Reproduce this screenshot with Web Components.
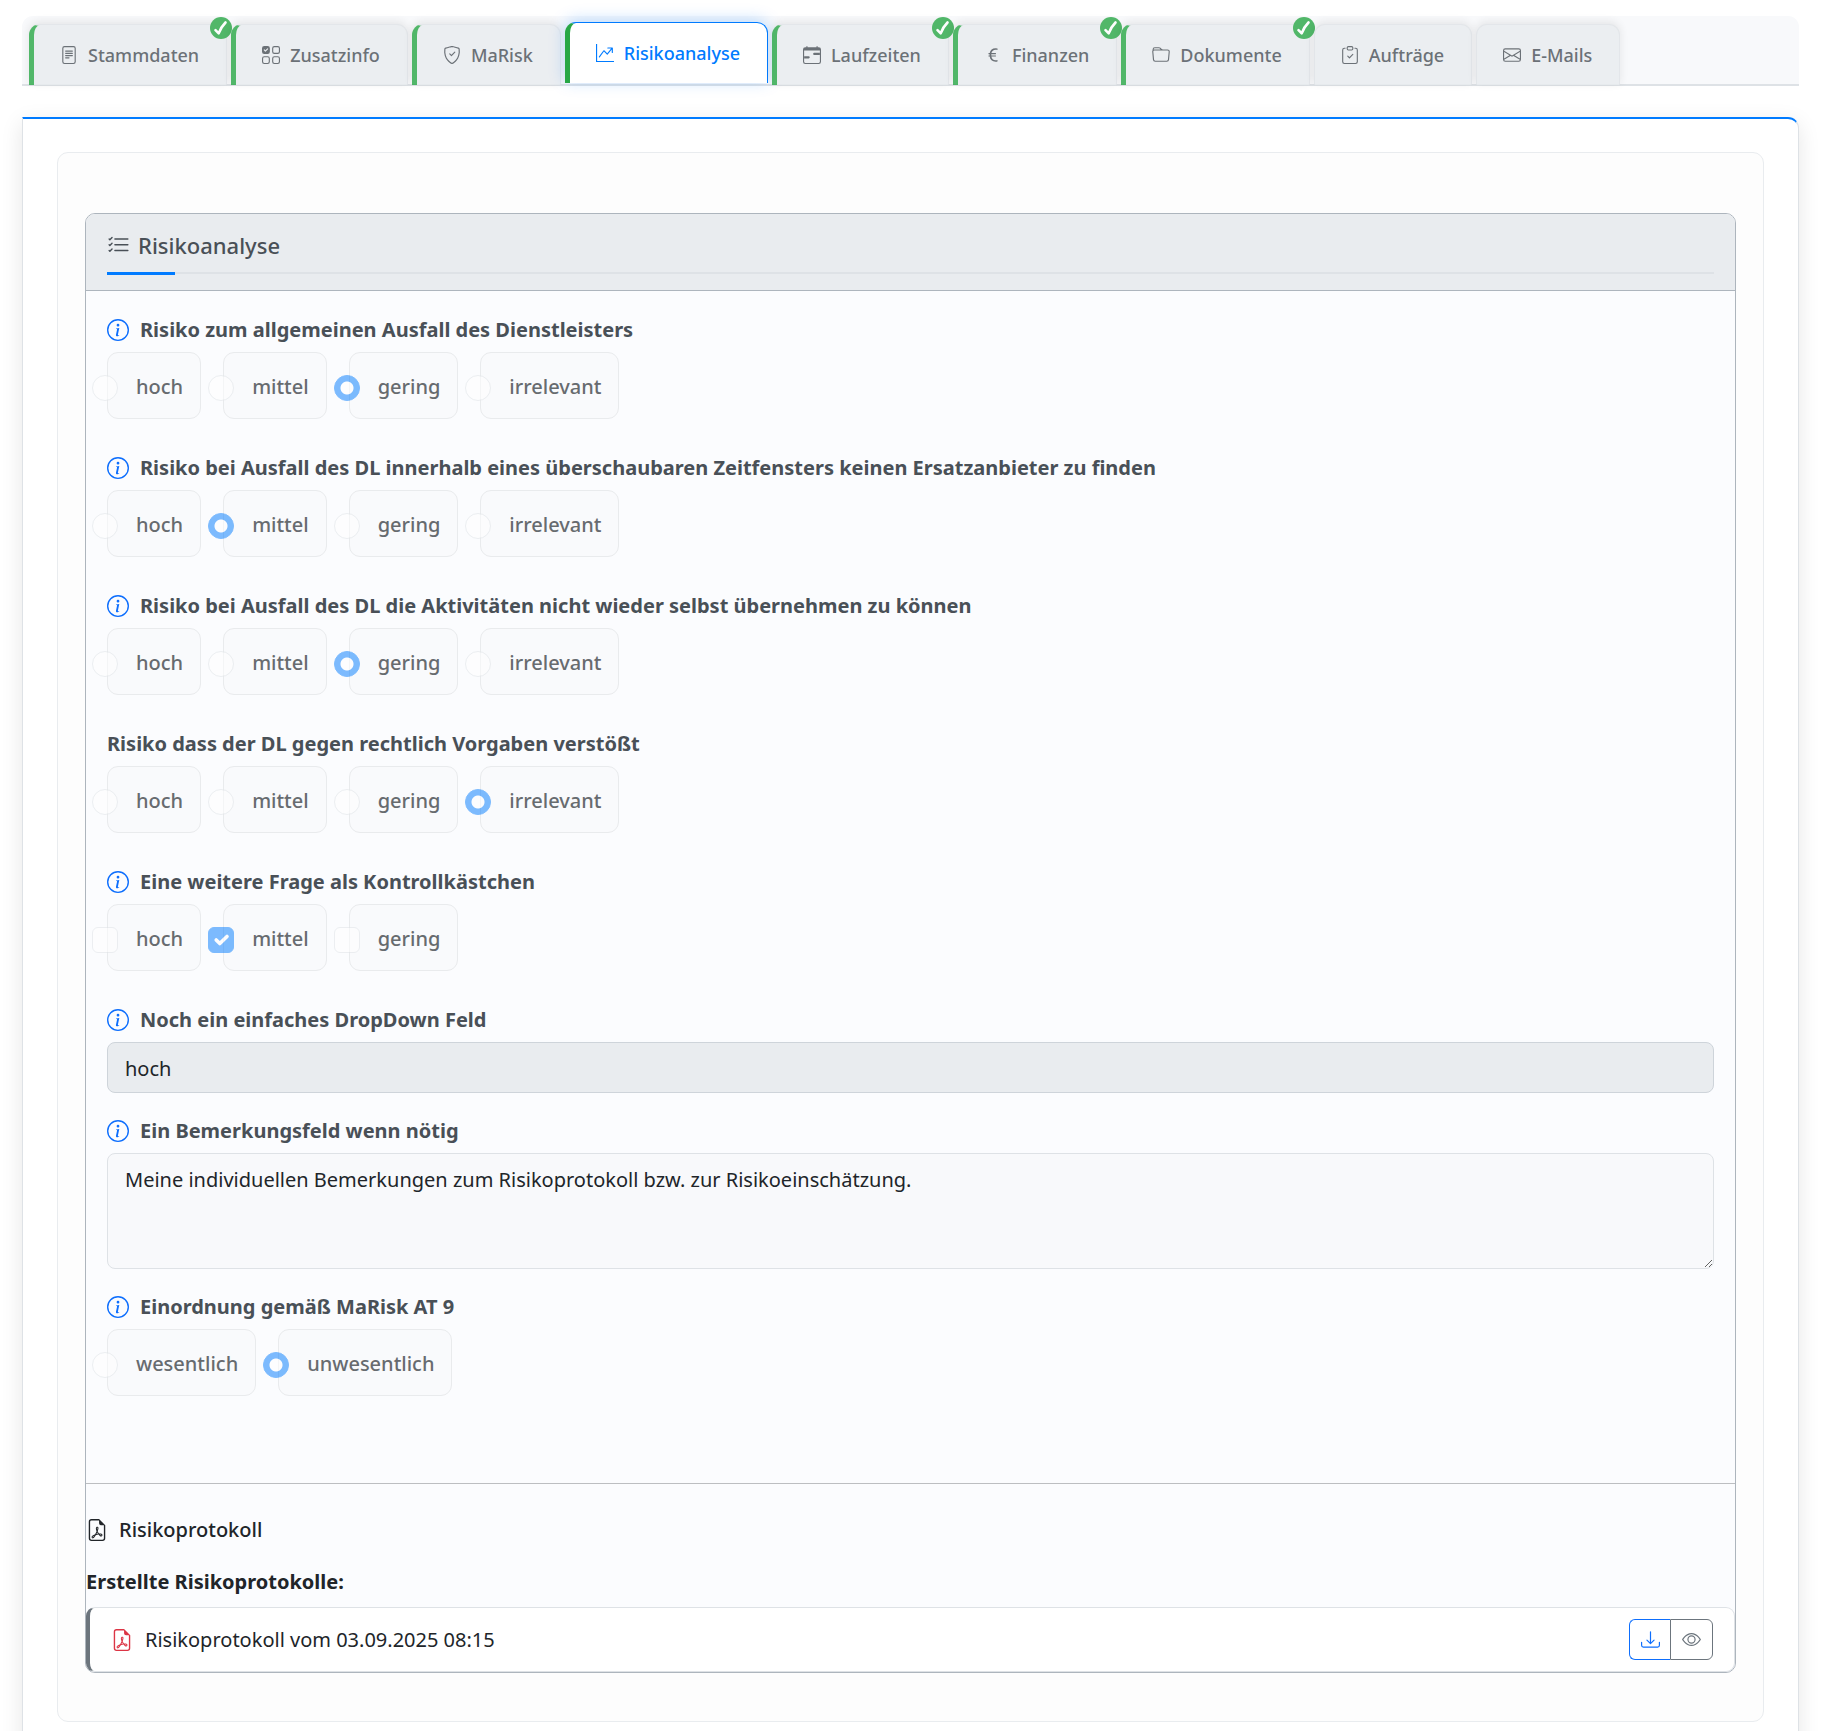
<!DOCTYPE html>
<html lang="de">
<head>
<meta charset="utf-8">
<meta name="viewport" content="width=device-width, initial-scale=1">
<title>Risikoanalyse</title>
<style>
  body {
    margin: 0;
    background: #fff;
    color: #212529;
    font-family: "Noto Sans", "Open Sans", sans-serif;
    font-size: 20px;
    line-height: 33px;
  }
</style>
</head>
<body>

<app-shell>
  <tab-bar slot="tabs">
    <nav-tab icon="file-text" state="done" checked>Stammdaten</nav-tab>
    <nav-tab icon="checks-grid" state="done">Zusatzinfo</nav-tab>
    <nav-tab icon="shield-check" state="done">MaRisk</nav-tab>
    <nav-tab icon="graph-up" state="done" active>Risikoanalyse</nav-tab>
    <nav-tab icon="calendar-range" state="done" checked>Laufzeiten</nav-tab>
    <nav-tab icon="euro" state="done" checked>Finanzen</nav-tab>
    <nav-tab icon="folder" state="done" checked>Dokumente</nav-tab>
    <nav-tab icon="clipboard-check">Aufträge</nav-tab>
    <nav-tab icon="envelope">E-Mails</nav-tab>
  </tab-bar>

  <tab-panel>
    <form-card icon="list-check" heading="Risikoanalyse">
      <choice-question info options="hoch,mittel,gering,irrelevant" value="gering">Risiko zum allgemeinen Ausfall des Dienstleisters</choice-question>
      <choice-question info options="hoch,mittel,gering,irrelevant" value="mittel">Risiko bei Ausfall des DL innerhalb eines überschaubaren Zeitfensters keinen Ersatzanbieter zu finden</choice-question>
      <choice-question info options="hoch,mittel,gering,irrelevant" value="gering">Risiko bei Ausfall des DL die Aktivitäten nicht wieder selbst übernehmen zu können</choice-question>
      <choice-question options="hoch,mittel,gering,irrelevant" value="irrelevant">Risiko dass der DL gegen rechtlich Vorgaben verstößt</choice-question>
      <choice-question info type="checkbox" options="hoch,mittel,gering" value="mittel">Eine weitere Frage als Kontrollkästchen</choice-question>
      <select-question options="hoch,mittel,gering" value="hoch">Noch ein einfaches DropDown Feld</select-question>
      <text-question value="Meine individuellen Bemerkungen zum Risikoprotokoll bzw. zur Risikoeinschätzung.">Ein Bemerkungsfeld wenn nötig</text-question>
      <choice-question info options="wesentlich,unwesentlich" value="unwesentlich">Einordnung gemäß MaRisk AT 9</choice-question>

      <protocol-list slot="footer">
        <protocol-item>Risikoprotokoll vom 03.09.2025 08:15</protocol-item>
      </protocol-list>
    </form-card>
  </tab-panel>
</app-shell>

<script>
const ICONS = {
  'file-text': '<path d="M5 4a.5.5 0 0 0 0 1h6a.5.5 0 0 0 0-1zm-.5 2.5A.5.5 0 0 1 5 6h6a.5.5 0 0 1 0 1H5a.5.5 0 0 1-.5-.5M5 8a.5.5 0 0 0 0 1h6a.5.5 0 0 0 0-1zm0 2a.5.5 0 0 0 0 1h3a.5.5 0 0 0 0-1z"/><path d="M2 2a2 2 0 0 1 2-2h8a2 2 0 0 1 2 2v12a2 2 0 0 1-2 2H4a2 2 0 0 1-2-2zm10-1H4a1 1 0 0 0-1 1v12a1 1 0 0 0 1 1h8a1 1 0 0 0 1-1V2a1 1 0 0 0-1-1"/>',
  'checks-grid': '<g fill="none" stroke="currentColor"><rect x="9.5" y=".5" width="6" height="6" rx="1.5"/><rect x=".5" y="9.5" width="6" height="6" rx="1.5"/><rect x="9.5" y="9.5" width="6" height="6" rx="1.5"/></g><path d="M0 2a2 2 0 0 1 2-2h3a2 2 0 0 1 2 2v3a2 2 0 0 1-2 2H2a2 2 0 0 1-2-2zm5.354.854a.5.5 0 1 0-.708-.708L3 3.793l-.646-.647a.5.5 0 1 0-.708.708l1 1a.5.5 0 0 0 .708 0z"/>',
  'shield-check': '<path d="M5.338 1.59a61 61 0 0 0-2.837.856.48.48 0 0 0-.328.39c-.554 4.157.726 7.19 2.253 9.188a10.7 10.7 0 0 0 2.287 2.233c.346.244.652.42.893.533q.18.085.293.118a1 1 0 0 0 .101.025 1 1 0 0 0 .1-.025q.114-.034.294-.118c.24-.113.547-.29.893-.533a10.7 10.7 0 0 0 2.287-2.233c1.527-1.997 2.807-5.031 2.253-9.188a.48.48 0 0 0-.328-.39c-.651-.213-1.75-.56-2.837-.855C9.552 1.29 8.531 1.067 8 1.067c-.53 0-1.552.223-2.662.524zM5.072.56C6.157.265 7.31 0 8 0s1.843.265 2.928.56c1.11.3 2.229.655 2.887.87a1.54 1.54 0 0 1 1.044 1.262c.596 4.477-.787 7.795-2.465 9.99a11.8 11.8 0 0 1-2.517 2.453 7 7 0 0 1-1.048.625c-.28.132-.581.24-.829.24s-.548-.108-.829-.24a7 7 0 0 1-1.048-.625 11.8 11.8 0 0 1-2.517-2.453C1.928 10.487.545 7.169 1.141 2.692A1.54 1.54 0 0 1 2.185 1.43 63 63 0 0 1 5.072.56"/><path d="M10.854 5.146a.5.5 0 0 1 0 .708l-3 3a.5.5 0 0 1-.708 0l-1.5-1.5a.5.5 0 1 1 .708-.708L7.5 7.793l2.646-2.647a.5.5 0 0 1 .708 0"/>',
  'graph-up': '<path d="M0 0h1v15h15v1H0zm10 3.5a.5.5 0 0 1 .5-.5h4a.5.5 0 0 1 .5.5v4a.5.5 0 0 1-1 0V4.9l-3.613 4.417a.5.5 0 0 1-.74.037L7.06 6.767l-3.656 5.027a.5.5 0 0 1-.808-.588l4-5.5a.5.5 0 0 1 .758-.06l2.609 2.61L13.445 4H10.5a.5.5 0 0 1-.5-.5"/>',
  'calendar-range': '<path d="M9 7a1 1 0 0 1 1-1h5v2h-5a1 1 0 0 1-1-1M1 9h4a1 1 0 0 1 0 2H1z"/><path d="M3.5 0a.5.5 0 0 1 .5.5V1h8V.5a.5.5 0 0 1 1 0V1h1a2 2 0 0 1 2 2v11a2 2 0 0 1-2 2H2a2 2 0 0 1-2-2V3a2 2 0 0 1 2-2h1V.5a.5.5 0 0 1 .5-.5M1 4v10a1 1 0 0 0 1 1h12a1 1 0 0 0 1-1V4z"/>',
  'euro': '<path d="M4 9.42h1.063C5.4 12.323 7.317 14 10.34 14c.622 0 1.167-.068 1.659-.185v-1.3c-.484.119-1.045.17-1.659.17-2.1 0-3.455-1.198-3.775-3.264h4.017v-.928H6.497v-.936q-.002-.165.008-.329h4.078v-.927H6.618c.388-1.898 1.719-2.985 3.723-2.985.614 0 1.175.05 1.659.177V2.194A6.6 6.6 0 0 0 10.341 2c-2.928 0-4.82 1.569-5.244 4.3H4v.928h1.01v1.265H4z"/>',
  'folder': '<path d="M.54 3.87.5 3a2 2 0 0 1 2-2h3.672a2 2 0 0 1 1.414.586l.828.828A2 2 0 0 0 9.828 3h3.982a2 2 0 0 1 1.992 2.181l-.637 7A2 2 0 0 1 13.174 14H2.826a2 2 0 0 1-1.991-1.819l-.637-7a2 2 0 0 1 .342-1.31zM2.19 4a1 1 0 0 0-.996 1.09l.637 7a1 1 0 0 0 .995.91h10.348a1 1 0 0 0 .995-.91l.637-7A1 1 0 0 0 13.81 4zm4.69-1.707A1 1 0 0 0 6.172 2H2.5a1 1 0 0 0-1 .981l.006.139q.323-.119.684-.12h5.396z"/>',
  'clipboard-check': '<path d="M10.854 7.146a.5.5 0 0 1 0 .708l-3 3a.5.5 0 0 1-.708 0l-1.5-1.5a.5.5 0 1 1 .708-.708L7.5 9.793l2.646-2.647a.5.5 0 0 1 .708 0"/><path d="M4 1.5H3a2 2 0 0 0-2 2V14a2 2 0 0 0 2 2h10a2 2 0 0 0 2-2V3.5a2 2 0 0 0-2-2h-1v1h1a1 1 0 0 1 1 1V14a1 1 0 0 1-1 1H3a1 1 0 0 1-1-1V3.5a1 1 0 0 1 1-1h1z"/><path d="M9.5 1a.5.5 0 0 1 .5.5v1a.5.5 0 0 1-.5.5h-3a.5.5 0 0 1-.5-.5v-1a.5.5 0 0 1 .5-.5zm-3-1A1.5 1.5 0 0 0 5 1.5v1A1.5 1.5 0 0 0 6.5 4h3A1.5 1.5 0 0 0 11 2.5v-1A1.5 1.5 0 0 0 9.5 0z"/>',
  'envelope': '<path d="M0 4a2 2 0 0 1 2-2h12a2 2 0 0 1 2 2v8a2 2 0 0 1-2 2H2a2 2 0 0 1-2-2zm2-1a1 1 0 0 0-1 1v.217l7 4.2 7-4.2V4a1 1 0 0 0-1-1zm13 2.383-4.708 2.825L15 11.105zm-.034 6.876-5.64-3.471L8 9.583l-1.326-.795-5.64 3.47A1 1 0 0 0 2 13h12a1 1 0 0 0 .966-.741M1 11.105l4.708-2.897L1 5.383z"/>',
  'list-check': '<path d="M5 11.5a.5.5 0 0 1 .5-.5h9a.5.5 0 0 1 0 1h-9a.5.5 0 0 1-.5-.5m0-4a.5.5 0 0 1 .5-.5h9a.5.5 0 0 1 0 1h-9a.5.5 0 0 1-.5-.5m0-4a.5.5 0 0 1 .5-.5h9a.5.5 0 0 1 0 1h-9a.5.5 0 0 1-.5-.5M3.854 2.146a.5.5 0 0 1 0 .708l-1.5 1.5a.5.5 0 0 1-.708 0l-.5-.5a.5.5 0 1 1 .708-.708L2 3.293l1.146-1.147a.5.5 0 0 1 .708 0m0 4a.5.5 0 0 1 0 .708l-1.5 1.5a.5.5 0 0 1-.708 0l-.5-.5a.5.5 0 1 1 .708-.708L2 7.293l1.146-1.147a.5.5 0 0 1 .708 0m0 4a.5.5 0 0 1 0 .708l-1.5 1.5a.5.5 0 0 1-.708 0l-.5-.5a.5.5 0 0 1 .708-.708l.146.147 1.146-1.147a.5.5 0 0 1 .708 0"/>',
  'info-circle': '<path d="M8 15A7 7 0 1 1 8 1a7 7 0 0 1 0 14m0 1A8 8 0 1 0 8 0a8 8 0 0 0 0 16"/><path d="m8.93 6.588-2.29.287-.082.38.45.083c.294.07.352.176.288.469l-.738 3.468c-.194.897.105 1.319.808 1.319.545 0 1.178-.252 1.465-.598l.088-.416c-.2.176-.492.246-.686.246-.275 0-.375-.193-.304-.533zM9 4.5a1 1 0 1 1-2 0 1 1 0 0 1 2 0"/>',
  'file-pdf': '<path d="M14 14V4.5L9.5 0H4a2 2 0 0 0-2 2v12a2 2 0 0 0 2 2h8a2 2 0 0 0 2-2M9.5 3A1.5 1.5 0 0 0 11 4.5h2V14a1 1 0 0 1-1 1H4a1 1 0 0 1-1-1V2a1 1 0 0 1 1-1h5.5z"/><path d="M4.603 14.087a.8.8 0 0 1-.438-.42c-.195-.388-.13-.776.08-1.102.198-.307.526-.568.897-.787a7.7 7.7 0 0 1 1.482-.645 20 20 0 0 0 1.062-2.227 7.3 7.3 0 0 1-.43-1.295c-.086-.4-.119-.796-.046-1.136.075-.354.274-.672.65-.823.192-.077.4-.12.602-.077a.7.7 0 0 1 .477.365c.088.164.12.356.127.538.007.188-.012.396-.047.614-.084.51-.27 1.134-.52 1.794a11 11 0 0 0 .98 1.686 5.8 5.8 0 0 1 1.334.05c.364.066.734.195.96.465.12.144.193.32.2.518.007.192-.047.382-.138.563a1.04 1.04 0 0 1-.354.416.86.86 0 0 1-.51.138c-.331-.014-.654-.196-.933-.417a5.7 5.7 0 0 1-.911-.95 11.7 11.7 0 0 0-1.997.406 11.3 11.3 0 0 1-1.02 1.51c-.292.35-.609.656-.927.787a.8.8 0 0 1-.58.029m1.379-1.901q-.25.115-.459.238c-.328.194-.541.383-.647.547-.094.145-.096.25-.04.361q.016.032.026.044l.035-.012c.137-.056.355-.235.635-.572a8 8 0 0 0 .45-.606m1.64-1.33a13 13 0 0 1 1.01-.193 12 12 0 0 1-.51-.858 21 21 0 0 1-.5 1.05zm2.446.45q.226.245.435.41c.24.19.407.253.498.256a.1.1 0 0 0 .07-.015.3.3 0 0 0 .094-.125.44.44 0 0 0 .059-.2.1.1 0 0 0-.026-.063c-.052-.062-.2-.152-.518-.209a4 4 0 0 0-.612-.053zM8.078 7.8a7 7 0 0 0 .2-.828q.046-.282.038-.465a.6.6 0 0 0-.032-.198.5.5 0 0 0-.145.04c-.087.035-.158.106-.196.283-.04.192-.03.469.046.822q.036.167.09.346z"/>',
  'download': '<path d="M.5 9.9a.5.5 0 0 1 .5.5v2.5a1 1 0 0 0 1 1h12a1 1 0 0 0 1-1v-2.5a.5.5 0 0 1 1 0v2.5a2 2 0 0 1-2 2H2a2 2 0 0 1-2-2v-2.5a.5.5 0 0 1 .5-.5"/><path d="M7.646 11.854a.5.5 0 0 0 .708 0l3-3a.5.5 0 0 0-.708-.708L8.5 10.293V1.5a.5.5 0 0 0-1 0v8.793L5.354 8.146a.5.5 0 1 0-.708.708z"/>',
  'eye': '<path d="M16 8s-3-5.5-8-5.5S0 8 0 8s3 5.5 8 5.5S16 8 16 8M1.173 8a13 13 0 0 1 1.66-2.043C4.12 4.668 5.88 3.5 8 3.5s3.879 1.168 5.168 2.457A13 13 0 0 1 14.828 8q-.086.13-.195.288c-.335.48-.83 1.12-1.465 1.755C11.879 11.332 10.119 12.5 8 12.5s-3.879-1.168-5.168-2.457A13 13 0 0 1 1.172 8z"/><path d="M8 5.5a2.5 2.5 0 1 0 0 5 2.5 2.5 0 0 0 0-5M4.5 8a3.5 3.5 0 1 1 7 0 3.5 3.5 0 0 1-7 0"/>'
};

class UiIcon extends HTMLElement {
    constructor() {
        super();
        this.shadowDOM = this.attachShadow({mode: "open"});
    }

    connectedCallback() {
        this.shadowDOM.innerHTML = `
            <style>
                :host { display: block; flex: none; width: 22px; height: 22px; }
                svg { display: block; width: 100%; height: 100%; }
            </style>
            <svg viewBox="0 0 16 16" fill="currentColor" fill-rule="nonzero" aria-hidden="true">${ICONS[this.getAttribute("name")]}</svg>
        `;
    }
}
customElements.define("ui-icon", UiIcon);

class AppShell extends HTMLElement {
    constructor() {
        super();
        this.shadowDOM = this.attachShadow({mode: "open"});
        this.shadowDOM.innerHTML = `
            <style>
                :host {
                    display: block;
                    box-sizing: border-box;
                    height: 100vh;
                    overflow-y: auto;
                    scrollbar-width: none;
                    padding: 16px 26px 16px 22px;
                }
                main { margin-top: 31px; }
            </style>
            <slot name="tabs"></slot>
            <main><slot></slot></main>
        `;
    }
}
customElements.define("app-shell", AppShell);

class TabBar extends HTMLElement {
    constructor() {
        super();
        this.shadowDOM = this.attachShadow({mode: "open"});
        this.shadowDOM.innerHTML = `
            <style>
                :host { display: block; }
                nav {
                    display: flex;
                    gap: 4px;
                    padding: 8px 7px 0;
                    background: #f8f9fb;
                    border-bottom: 2px solid #dee2e6;
                    border-radius: 11px 11px 0 0;
                }
            </style>
            <nav><slot></slot></nav>
        `;
    }
}
customElements.define("tab-bar", TabBar);

class NavTab extends HTMLElement {
    constructor() {
        super();
        this.shadowDOM = this.attachShadow({mode: "open"});
    }

    connectedCallback() {
        const badge = this.hasAttribute("checked") ? `
            <svg class="badge" viewBox="0 0 22 22" aria-hidden="true">
                <circle cx="11" cy="11" r="11" fill="#28a745"/>
                <path d="M5.5 13.2 8.7 16.4Q11 10 15.5 5.5" fill="none" stroke="#fff" stroke-width="2.6" stroke-linecap="round" stroke-linejoin="round"/>
            </svg>` : "";
        this.shadowDOM.innerHTML = `
            <style>
                :host { display: block; position: relative; margin-bottom: -1px; opacity: .8; }
                :host([active]) { opacity: 1; transform: translateY(-2px); }
                button {
                    display: flex;
                    align-items: center;
                    gap: 10px;
                    box-sizing: border-box;
                    height: 61px;
                    padding: 0 27px 0 26px;
                    border: 1px solid #dee2e6;
                    border-bottom: 0;
                    border-radius: 11px 11px 0 0;
                    background: #e9ecef;
                    box-shadow: 0 -2px 8px rgba(0, 0, 0, .1);
                    color: #495057;
                    font: 500 18px/26px "Noto Sans", "Open Sans", sans-serif;
                    white-space: nowrap;
                }
                :host([state="done"]) button { border-left: 5px solid #28a745; }
                :host([active]) button {
                    background: #fff;
                    border-color: #007bff;
                    border-left-color: #28a745;
                    color: #007bff;
                    box-shadow: 0 -2px 16px rgba(0, 123, 255, .25);
                }
                ui-icon { width: 18px; height: 18px; }
                .badge { position: absolute; top: -7px; right: -5px; width: 22px; height: 22px; }
            </style>
            <button type="button"><ui-icon name="${this.getAttribute("icon")}"></ui-icon><slot></slot></button>
            ${badge}
        `;
    }
}
customElements.define("nav-tab", NavTab);

class TabPanel extends HTMLElement {
    constructor() {
        super();
        this.shadowDOM = this.attachShadow({mode: "open"});
        this.shadowDOM.innerHTML = `
            <style>
                :host {
                    display: block;
                    padding: 33px 34px;
                    border: 1px solid #dee2e6;
                    border-top: 2px solid #007bff;
                    border-radius: 0 11px 11px 11px;
                    background: #fff;
                    box-shadow: 0 6px 22px rgba(0, 0, 0, .1);
                }
                section {
                    padding: 60px 27px 48px;
                    border: 1px solid #e9ecef;
                    border-radius: 11px;
                    background: #fdfdfd;
                }
            </style>
            <section><slot></slot></section>
        `;
    }
}
customElements.define("tab-panel", TabPanel);

class FormCard extends HTMLElement {
    constructor() {
        super();
        this.shadowDOM = this.attachShadow({mode: "open"});
    }

    connectedCallback() {
        this.shadowDOM.innerHTML = `
            <style>
                :host {
                    display: block;
                    border: 1px solid #adb5bd;
                    border-radius: 10px;
                    background: #fbfcfe;
                }
                header {
                    padding: 16px 21px;
                    border-bottom: 1px solid #adb5bd;
                    border-radius: 9px 9px 0 0;
                    background: #e9ecef;
                }
                h2 {
                    display: flex;
                    align-items: center;
                    gap: 8px;
                    margin: 0;
                    padding-bottom: 12px;
                    border-bottom: 2px solid #dee2e6;
                    color: #495057;
                    font-size: 22px;
                    font-weight: 500;
                    line-height: 30px;
                }
                /* accent bar laid over the start of the heading's rule */
                h2::after {
                    content: "";
                    position: absolute;
                    bottom: -1px;
                    left: 0;
                    width: 68px;
                    height: 3px;
                    background: #007bff;
                }
                .title { position: relative; }
                .title ui-icon { width: 23px; height: 23px; }
                .body { padding: 23px 21px 54px; }
                footer { border-top: 1px solid #bcbec1; }
            </style>
            <header>
                <div class="title">
                    <h2><ui-icon name="${this.getAttribute("icon")}"></ui-icon>${this.getAttribute("heading")}</h2>
                </div>
            </header>
            <div class="body"><slot></slot></div>
            <footer><slot name="footer"></slot></footer>
        `;
    }
}
customElements.define("form-card", FormCard);

const QUESTION_STYLE = `
    :host { display: block; margin-bottom: 22px; }
    .caption {
        display: flex;
        align-items: center;
        gap: 11px;
        margin-bottom: 7px;
        padding: 0;
        color: #495057;
        font-size: 20px;
        font-weight: 700;
        line-height: 31px;
    }
    .caption ui-icon { color: #0d6efd; }
    .field {
        display: block;
        box-sizing: border-box;
        width: 100%;
        margin: 0;
        padding: 9px 17px 7px;
        border: 1px solid #ced4da;
        border-radius: 8px;
        color: #212529;
        font: inherit;
        line-height: 33px;
        opacity: 1;
    }
`;

class ChoiceQuestion extends HTMLElement {
    constructor() {
        super();
        this.shadowDOM = this.attachShadow({mode: "open"});
    }

    connectedCallback() {
        const type = this.getAttribute("type") || "radio";
        const value = this.getAttribute("value");
        const info = this.hasAttribute("info") ? '<ui-icon name="info-circle"></ui-icon>' : "";
        const options = this.getAttribute("options").split(",").map(option => `
            <label><input type="${type}" name="choice" value="${option}" disabled ${option === value ? "checked" : ""}>${option}</label>
        `).join("");

        this.shadowDOM.innerHTML = `
            <style>
                ${QUESTION_STYLE}
                fieldset { margin: 0; padding: 0 0 11px; border: 0; min-width: 0; }
                .options { display: flex; flex-wrap: wrap; gap: 22px; }
                label {
                    display: flex;
                    align-items: center;
                    padding: 17px 17px 15px 28px;
                    border: 1px solid #e9ebed;
                    border-radius: 11px;
                    background: #f9fafc;
                    color: #676b6f;
                    font-weight: 500;
                }
                /* the control straddles the left edge of its box */
                input {
                    appearance: none;
                    box-sizing: border-box;
                    width: 26px;
                    height: 26px;
                    margin: 2px 18px 0 -44px;
                    border: 1px solid #dee2e6;
                    border-radius: 50%;
                    background: #fff;
                    opacity: .5;
                }
                input[type="checkbox"] { border-radius: 6px; }
                input:checked { border-color: #007bff; background: #007bff center / 100% no-repeat; }
                input[type="radio"]:checked { background-image: radial-gradient(circle, #fff 6px, transparent 7px); }
                input[type="checkbox"]:checked {
                    background-image: url("data:image/svg+xml,%3Csvg xmlns='http://www.w3.org/2000/svg' viewBox='0 0 20 20'%3E%3Cpath fill='none' stroke='%23fff' stroke-linecap='round' stroke-linejoin='round' stroke-width='3' d='m6 10 3 3 6-6'/%3E%3C/svg%3E");
                }
            </style>
            <fieldset>
                <legend class="caption">${info}<slot></slot></legend>
                <div class="options">${options}</div>
            </fieldset>
        `;
    }
}
customElements.define("choice-question", ChoiceQuestion);

class SelectQuestion extends HTMLElement {
    constructor() {
        super();
        this.shadowDOM = this.attachShadow({mode: "open"});
    }

    connectedCallback() {
        const value = this.getAttribute("value");
        const options = this.getAttribute("options").split(",")
            .map(option => `<option ${option === value ? "selected" : ""}>${option}</option>`).join("");

        this.shadowDOM.innerHTML = `
            <style>
                ${QUESTION_STYLE}
                select { appearance: none; background: #e9ecef; }
            </style>
            <label class="caption" for="field"><ui-icon name="info-circle"></ui-icon><slot></slot></label>
            <select class="field" id="field" disabled>${options}</select>
        `;
    }
}
customElements.define("select-question", SelectQuestion);

class TextQuestion extends HTMLElement {
    constructor() {
        super();
        this.shadowDOM = this.attachShadow({mode: "open"});
    }

    connectedCallback() {
        this.shadowDOM.innerHTML = `
            <style>
                ${QUESTION_STYLE}
                textarea.field { height: 116px; resize: vertical; border-color: #dee2e6; background: #f8f9fb; }
            </style>
            <label class="caption" for="field"><ui-icon name="info-circle"></ui-icon><slot></slot></label>
            <textarea class="field" id="field" readonly>${this.getAttribute("value")}</textarea>
        `;
    }
}
customElements.define("text-question", TextQuestion);

class ProtocolList extends HTMLElement {
    constructor() {
        super();
        this.shadowDOM = this.attachShadow({mode: "open"});
        this.shadowDOM.innerHTML = `
            <style>
                :host { display: block; padding-top: 29px; }
                h3 {
                    display: flex;
                    align-items: center;
                    gap: 11px;
                    margin: 0 0 19px;
                    font-size: 20px;
                    font-weight: 500;
                    line-height: 33px;
                }
                h4 { margin: 0 0 9px; font-size: 20px; font-weight: 700; line-height: 33px; }
            </style>
            <h3><ui-icon name="file-pdf"></ui-icon>Risikoprotokoll</h3>
            <h4>Erstellte Risikoprotokolle:</h4>
            <slot></slot>
        `;
    }
}
customElements.define("protocol-list", ProtocolList);

class ProtocolItem extends HTMLElement {
    constructor() {
        super();
        this.shadowDOM = this.attachShadow({mode: "open"});
        this.shadowDOM.innerHTML = `
            <style>
                :host {
                    display: flex;
                    align-items: center;
                    gap: 12px;
                    padding: 11px 21px;
                    border: 1px solid #dee2e6;
                    border-left: 4px solid #6c757d;
                    border-radius: 9px;
                    background: #fff;
                }
                .file { color: #dc3545; }
                .name { flex: 1; }
                .actions { display: flex; }
                button {
                    display: flex;
                    align-items: center;
                    justify-content: center;
                    box-sizing: border-box;
                    width: 41px;
                    height: 41px;
                    padding: 0;
                    background: #fff;
                    border: 1px solid #0d6efd;
                    border-right: 0;
                    border-radius: 6px 0 0 6px;
                    color: #0d6efd;
                }
                button + button {
                    width: 43px;
                    border: 1px solid #6c757d;
                    border-radius: 0 6px 6px 0;
                    color: #6c757d;
                }
                button ui-icon { width: 19px; height: 19px; }
            </style>
            <ui-icon class="file" name="file-pdf"></ui-icon>
            <span class="name"><slot></slot></span>
            <div class="actions">
                <button type="button" aria-label="Herunterladen"><ui-icon name="download"></ui-icon></button>
                <button type="button" aria-label="Ansehen"><ui-icon name="eye"></ui-icon></button>
            </div>
        `;
    }
}
customElements.define("protocol-item", ProtocolItem);
</script>
</body>
</html>
